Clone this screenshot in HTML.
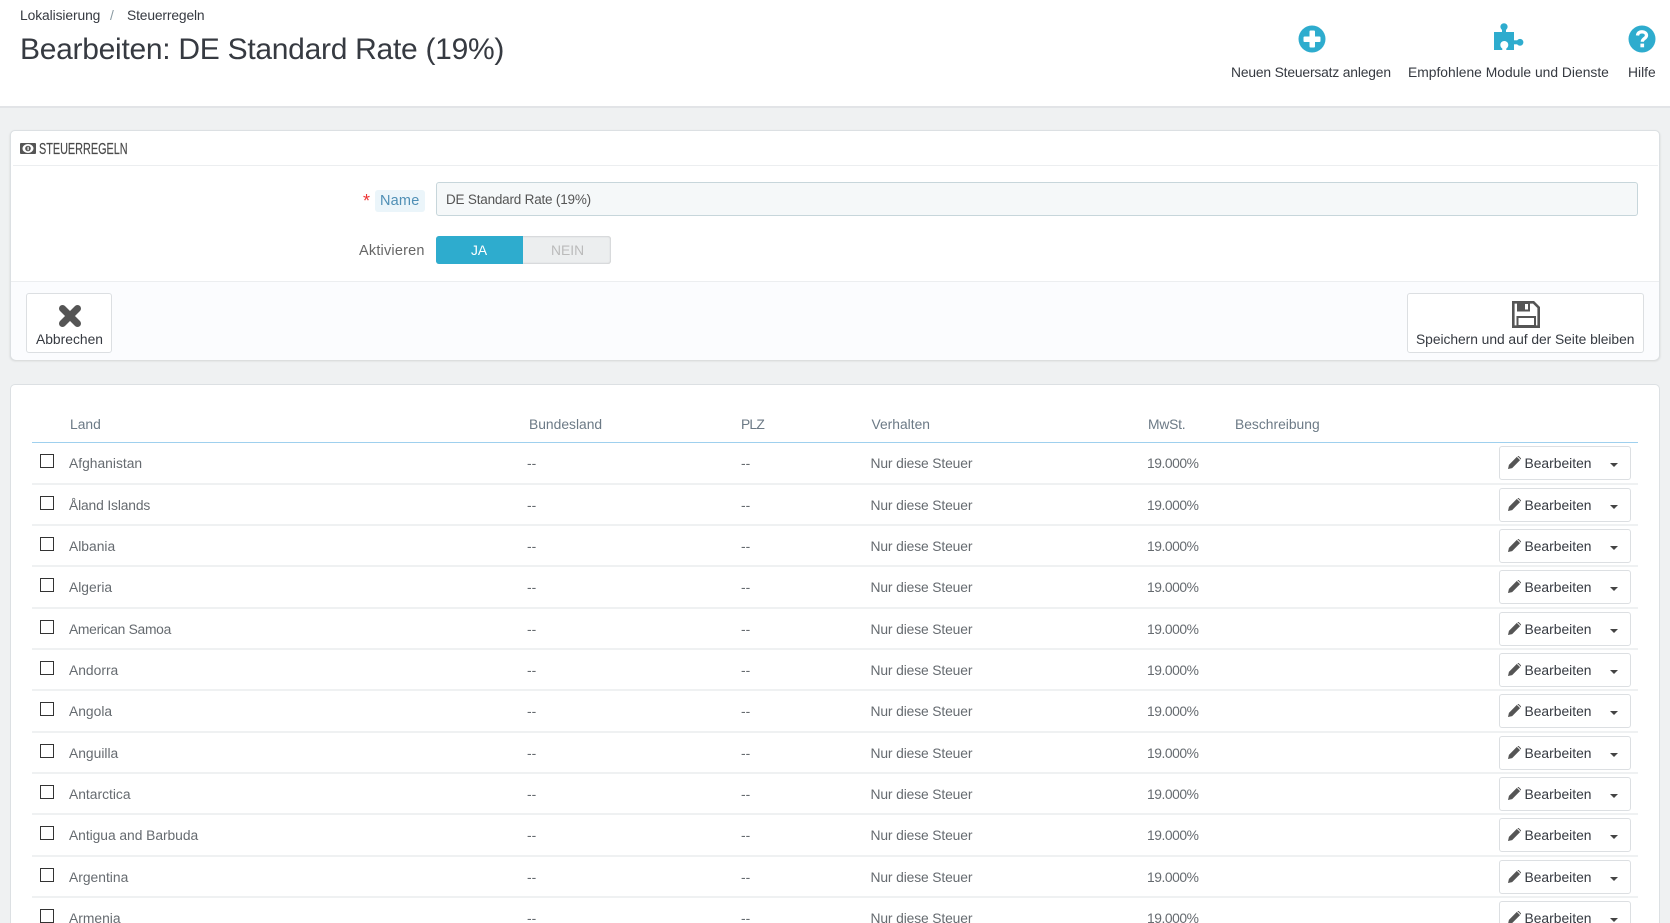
<!DOCTYPE html>
<html lang="de"><head><meta charset="utf-8"><title>Steuerregeln</title>
<style>
html,body{margin:0;padding:0;width:1670px;height:923px;overflow:hidden;background:#eff1f2;font-family:"Liberation Sans",Arial,sans-serif;color:#555}
#w{position:relative;width:1670px;height:923px;overflow:hidden;background:#eff1f2}
.a,.r span,.r i,.r b{position:absolute;white-space:nowrap}
.a{line-height:16px;font-size:13.85px}
.hd{position:absolute;left:0;top:0;width:1670px;height:106px;background:#fff;border-bottom:2px solid #e2e4e7}
.panel{position:absolute;left:10px;width:1650px;background:#fff;border:1px solid #dce0e3;border-radius:5px;box-shadow:0 1px 2px rgba(0,0,0,.12)}
.btn{position:absolute;background:#fff;border:1px solid #dcdfe2;border-radius:3px;box-sizing:border-box}
.r{position:absolute;left:32px;width:1606px;height:41px;border-bottom:2px solid #eff1f2;box-sizing:border-box}
.r span{line-height:16px;font-size:13.85px;top:12px;color:#666b70}
.r .cb{left:8px;top:11px;width:13.5px;height:13.5px;border:1px solid #333;box-sizing:border-box;background:#fff}
.r .c1{left:37px}.r .c2{left:495px}.r .c3{left:709px}.r .c4{left:838.5px;letter-spacing:-.13px}.r .c5{left:1115px;letter-spacing:-.45px}
.r .eb{left:1467px;top:3px;width:132px;height:34px;border:1px solid #dcdfe2;border-radius:3px;background:#fff;box-sizing:border-box}
.r .bt{left:1492.5px;color:#363a41}
.r svg{position:absolute;left:1476px;top:13px}
.r .ca{left:1578px;top:20px;width:0;height:0;border-left:4.5px solid transparent;border-right:4.5px solid transparent;border-top:4.5px solid #444}
</style></head><body><div id="w">
<div class="hd"></div>
<div class="a" style="left:20px;top:7px;color:#363a41;letter-spacing:-.1px">Lokalisierung</div>
<div class="a" style="left:110px;top:7px;color:#8a9aa2">/</div>
<div class="a" style="left:127px;top:7px;color:#363a41;letter-spacing:-.15px">Steuerregeln</div>
<div class="a" style="left:20px;top:33px;font-size:30px;line-height:34px;color:#363a41;letter-spacing:-.28px">Bearbeiten: DE Standard Rate (19%)</div>

<svg style="position:absolute;left:1298px;top:25px" width="28" height="28" viewBox="0 0 28 28"><circle cx="14" cy="14" r="13.5" fill="#2eacce"/><rect x="5.5" y="11.5" width="17" height="5.5" rx="1" fill="#fff"/><rect x="11.5" y="5.5" width="5.5" height="17" rx="1" fill="#fff"/></svg>
<svg style="position:absolute;left:1494px;top:23px" width="30" height="28" viewBox="0 0 30 28"><rect x="0" y="9" width="20" height="18" fill="#2eacce"/><circle cx="10" cy="3.8" r="3.6" fill="#2eacce"/><rect x="8" y="5" width="4" height="6" fill="#2eacce"/><circle cx="26" cy="19.3" r="3.4" fill="#2eacce"/><rect x="18" y="17.300" width="7" height="4" fill="#2eacce"/><circle cx="10.300" cy="22" r="4" fill="#fff"/><rect x="8.300" y="23" width="4" height="4" fill="#fff"/></svg>
<svg style="position:absolute;left:1628px;top:25px" width="28" height="28" viewBox="0 0 28 28"><circle cx="14" cy="14" r="13.5" fill="#2eacce"/><path d="M9.500 10.500C9.800 7.800 11.800 6.800 14 6.800C16.500 6.800 18.500 8.300 18.500 10.500C18.500 13.500 14.300 13.500 14.300 16.800" fill="none" stroke="#fff" stroke-width="3.300"/><rect x="12.400" y="18.600" width="3.700" height="3.700" fill="#fff"/></svg>
<div class="a" style="left:1231px;top:64px;color:#363a41;letter-spacing:-.17px">Neuen Steuersatz anlegen</div>
<div class="a" style="left:1408px;top:64px;color:#363a41">Empfohlene Module und Dienste</div>
<div class="a" style="left:1628px;top:64px;color:#363a41">Hilfe</div>

<div class="panel" style="top:130px;height:230px;box-sizing:border-box"></div>
<div style="position:absolute;left:13px;top:165px;width:1645px;height:1px;background:#eceef0"></div>
<svg style="position:absolute;left:20px;top:143px" width="16" height="11" viewBox="0 0 16 11"><rect width="16" height="11" rx="1" fill="#555"/><ellipse cx="8" cy="5.500" rx="5.500" ry="4.500" fill="#fff"/><circle cx="8" cy="5.500" r="2.800" fill="#555"/><rect x="7.500" y="3.800" width="1.200" height="3.400" fill="#fff"/></svg>
<div class="a" style="left:39px;top:142px;font-size:15.5px;color:#4a4a4a;transform:scaleX(.7);transform-origin:0 0;-webkit-text-stroke:.2px #4a4a4a">STEUERREGELN</div>
<div class="a" style="left:363px;top:193px;font-size:18px;color:#e33">*</div>
<div style="position:absolute;left:375px;top:190px;width:50px;height:22px;background:#ebf5fa;border-radius:3px"></div>
<div class="a" style="left:380px;top:193px;font-size:14.500px;color:#4f8fb5;letter-spacing:.2px">Name</div>
<div style="position:absolute;left:436px;top:182px;width:1202px;height:34px;background:#f5f8f9;border:1px solid #c7d6db;border-radius:3px;box-sizing:border-box"></div>
<div class="a" style="left:446px;top:192px;color:#555;font-size:13.500px;letter-spacing:-.2px">DE Standard Rate (19%)</div>
<div class="a" style="left:359px;top:243px;font-size:14.500px;color:#666;letter-spacing:.2px">Aktivieren</div>
<div style="position:absolute;left:436px;top:236px;width:175px;height:28px;background:#eceeef;border-radius:3px;box-shadow:inset 0 0 2px rgba(0,0,0,.25)"></div>
<div style="position:absolute;left:436px;top:236px;width:87px;height:28px;background:#2eacce;border-radius:3px 0 0 3px"></div>
<div class="a" style="left:471px;top:242px;color:#fff">JA</div>
<div class="a" style="left:551px;top:242px;color:#bbb">NEIN</div>
<div style="position:absolute;left:11px;top:281px;width:1648px;height:78px;background:#fbfcfe;border-top:1px solid #eceef0;border-radius:0 0 5px 5px"></div>
<div class="btn" style="left:26px;top:293px;width:86px;height:60px"></div>
<svg style="position:absolute;left:58px;top:304px" width="24" height="24" viewBox="0 0 24 24"><path d="M4.500 4.500L19.500 19.500M19.500 4.500L4.500 19.500" stroke="#555" stroke-width="7" stroke-linecap="round"/></svg>
<div class="a" style="left:36px;top:331px;color:#363a41">Abbrechen</div>
<div class="btn" style="left:1407px;top:293px;width:237px;height:60px"></div>
<svg style="position:absolute;left:1512px;top:301px" width="28" height="27" viewBox="0 0 28 27"><path d="M1.300 1.300H21.500L26.700 6.500V25.700H1.300Z" fill="#fff" stroke="#555" stroke-width="2.600"/><rect x="5" y="1" width="13" height="9.500" fill="#555"/><rect x="13" y="3" width="3" height="5.500" fill="#fff"/><rect x="5.500" y="16" width="17.500" height="9" fill="#fff" stroke="#555" stroke-width="2"/></svg>
<div class="a" style="left:1416px;top:331px;color:#363a41;letter-spacing:-.05px">Speichern und auf der Seite bleiben</div>

<div class="panel" style="top:384px;height:539px;box-sizing:border-box;border-bottom:0;border-radius:5px 5px 0 0;box-shadow:none"></div>
<div class="a" style="left:70px;top:416px;color:#6c7a86">Land</div>
<div class="a" style="left:529px;top:416px;color:#6c7a86">Bundesland</div>
<div class="a" style="left:741px;top:416px;color:#6c7a86;letter-spacing:-.8px">PLZ</div>
<div class="a" style="left:871.500px;top:416px;color:#6c7a86">Verhalten</div>
<div class="a" style="left:1148px;top:416px;color:#6c7a86;letter-spacing:-.2px">MwSt.</div>
<div class="a" style="left:1235px;top:416px;color:#6c7a86">Beschreibung</div>
<div style="position:absolute;left:32px;top:442px;width:1606px;height:1px;background:#9fd0ee"></div>

<div class="r" style="top:443px;height:42px"><i class="cb"></i><span class="c1">Afghanistan</span><span class="c2">--</span><span class="c3">--</span><span class="c4">Nur diese Steuer</span><span class="c5">19.000%</span><i class="eb"></i><svg width="13" height="13" viewBox="0 0 14 14"><path d="M0 14L1 9.500L9.500 1L13 4.500L4.500 13ZM10.500 0H11.500L14 2.500V3.500L13.700 3.800L10.200 .3Z" fill="#555"/></svg><span class="bt">Bearbeiten</span><i class="ca"></i></div>
<div class="r" style="top:485px;height:41px"><i class="cb"></i><span class="c1" style="letter-spacing:-.15px">Åland Islands</span><span class="c2">--</span><span class="c3">--</span><span class="c4">Nur diese Steuer</span><span class="c5">19.000%</span><i class="eb"></i><svg width="13" height="13" viewBox="0 0 14 14"><path d="M0 14L1 9.500L9.500 1L13 4.500L4.500 13ZM10.500 0H11.500L14 2.500V3.500L13.700 3.800L10.200 .3Z" fill="#555"/></svg><span class="bt">Bearbeiten</span><i class="ca"></i></div>
<div class="r" style="top:526px;height:41px"><i class="cb"></i><span class="c1">Albania</span><span class="c2">--</span><span class="c3">--</span><span class="c4">Nur diese Steuer</span><span class="c5">19.000%</span><i class="eb"></i><svg width="13" height="13" viewBox="0 0 14 14"><path d="M0 14L1 9.500L9.500 1L13 4.500L4.500 13ZM10.500 0H11.500L14 2.500V3.500L13.700 3.800L10.200 .3Z" fill="#555"/></svg><span class="bt">Bearbeiten</span><i class="ca"></i></div>
<div class="r" style="top:567px;height:42px"><i class="cb"></i><span class="c1">Algeria</span><span class="c2">--</span><span class="c3">--</span><span class="c4">Nur diese Steuer</span><span class="c5">19.000%</span><i class="eb"></i><svg width="13" height="13" viewBox="0 0 14 14"><path d="M0 14L1 9.500L9.500 1L13 4.500L4.500 13ZM10.500 0H11.500L14 2.500V3.500L13.700 3.800L10.200 .3Z" fill="#555"/></svg><span class="bt">Bearbeiten</span><i class="ca"></i></div>
<div class="r" style="top:609px;height:41px"><i class="cb"></i><span class="c1" style="letter-spacing:-.3px">American Samoa</span><span class="c2">--</span><span class="c3">--</span><span class="c4">Nur diese Steuer</span><span class="c5">19.000%</span><i class="eb"></i><svg width="13" height="13" viewBox="0 0 14 14"><path d="M0 14L1 9.500L9.500 1L13 4.500L4.500 13ZM10.500 0H11.500L14 2.500V3.500L13.700 3.800L10.200 .3Z" fill="#555"/></svg><span class="bt">Bearbeiten</span><i class="ca"></i></div>
<div class="r" style="top:650px;height:41px"><i class="cb"></i><span class="c1">Andorra</span><span class="c2">--</span><span class="c3">--</span><span class="c4">Nur diese Steuer</span><span class="c5">19.000%</span><i class="eb"></i><svg width="13" height="13" viewBox="0 0 14 14"><path d="M0 14L1 9.500L9.500 1L13 4.500L4.500 13ZM10.500 0H11.500L14 2.500V3.500L13.700 3.800L10.200 .3Z" fill="#555"/></svg><span class="bt">Bearbeiten</span><i class="ca"></i></div>
<div class="r" style="top:691px;height:42px"><i class="cb"></i><span class="c1">Angola</span><span class="c2">--</span><span class="c3">--</span><span class="c4">Nur diese Steuer</span><span class="c5">19.000%</span><i class="eb"></i><svg width="13" height="13" viewBox="0 0 14 14"><path d="M0 14L1 9.500L9.500 1L13 4.500L4.500 13ZM10.500 0H11.500L14 2.500V3.500L13.700 3.800L10.200 .3Z" fill="#555"/></svg><span class="bt">Bearbeiten</span><i class="ca"></i></div>
<div class="r" style="top:733px;height:41px"><i class="cb"></i><span class="c1">Anguilla</span><span class="c2">--</span><span class="c3">--</span><span class="c4">Nur diese Steuer</span><span class="c5">19.000%</span><i class="eb"></i><svg width="13" height="13" viewBox="0 0 14 14"><path d="M0 14L1 9.500L9.500 1L13 4.500L4.500 13ZM10.500 0H11.500L14 2.500V3.500L13.700 3.800L10.200 .3Z" fill="#555"/></svg><span class="bt">Bearbeiten</span><i class="ca"></i></div>
<div class="r" style="top:774px;height:41px"><i class="cb"></i><span class="c1">Antarctica</span><span class="c2">--</span><span class="c3">--</span><span class="c4">Nur diese Steuer</span><span class="c5">19.000%</span><i class="eb"></i><svg width="13" height="13" viewBox="0 0 14 14"><path d="M0 14L1 9.500L9.500 1L13 4.500L4.500 13ZM10.500 0H11.500L14 2.500V3.500L13.700 3.800L10.200 .3Z" fill="#555"/></svg><span class="bt">Bearbeiten</span><i class="ca"></i></div>
<div class="r" style="top:815px;height:42px"><i class="cb"></i><span class="c1" style="letter-spacing:-.05px">Antigua and Barbuda</span><span class="c2">--</span><span class="c3">--</span><span class="c4">Nur diese Steuer</span><span class="c5">19.000%</span><i class="eb"></i><svg width="13" height="13" viewBox="0 0 14 14"><path d="M0 14L1 9.500L9.500 1L13 4.500L4.500 13ZM10.500 0H11.500L14 2.500V3.500L13.700 3.800L10.200 .3Z" fill="#555"/></svg><span class="bt">Bearbeiten</span><i class="ca"></i></div>
<div class="r" style="top:857px;height:41px"><i class="cb"></i><span class="c1">Argentina</span><span class="c2">--</span><span class="c3">--</span><span class="c4">Nur diese Steuer</span><span class="c5">19.000%</span><i class="eb"></i><svg width="13" height="13" viewBox="0 0 14 14"><path d="M0 14L1 9.500L9.500 1L13 4.500L4.500 13ZM10.500 0H11.500L14 2.500V3.500L13.700 3.800L10.200 .3Z" fill="#555"/></svg><span class="bt">Bearbeiten</span><i class="ca"></i></div>
<div class="r" style="top:898px;height:25px;border:0;overflow:hidden"><i class="cb"></i><span class="c1">Armenia</span><span class="c2">--</span><span class="c3">--</span><span class="c4">Nur diese Steuer</span><span class="c5">19.000%</span><i class="eb"></i><svg width="13" height="13" viewBox="0 0 14 14"><path d="M0 14L1 9.500L9.500 1L13 4.500L4.500 13ZM10.500 0H11.500L14 2.500V3.500L13.700 3.800L10.200 .3Z" fill="#555"/></svg><span class="bt">Bearbeiten</span><i class="ca"></i></div>
</div></body></html>
